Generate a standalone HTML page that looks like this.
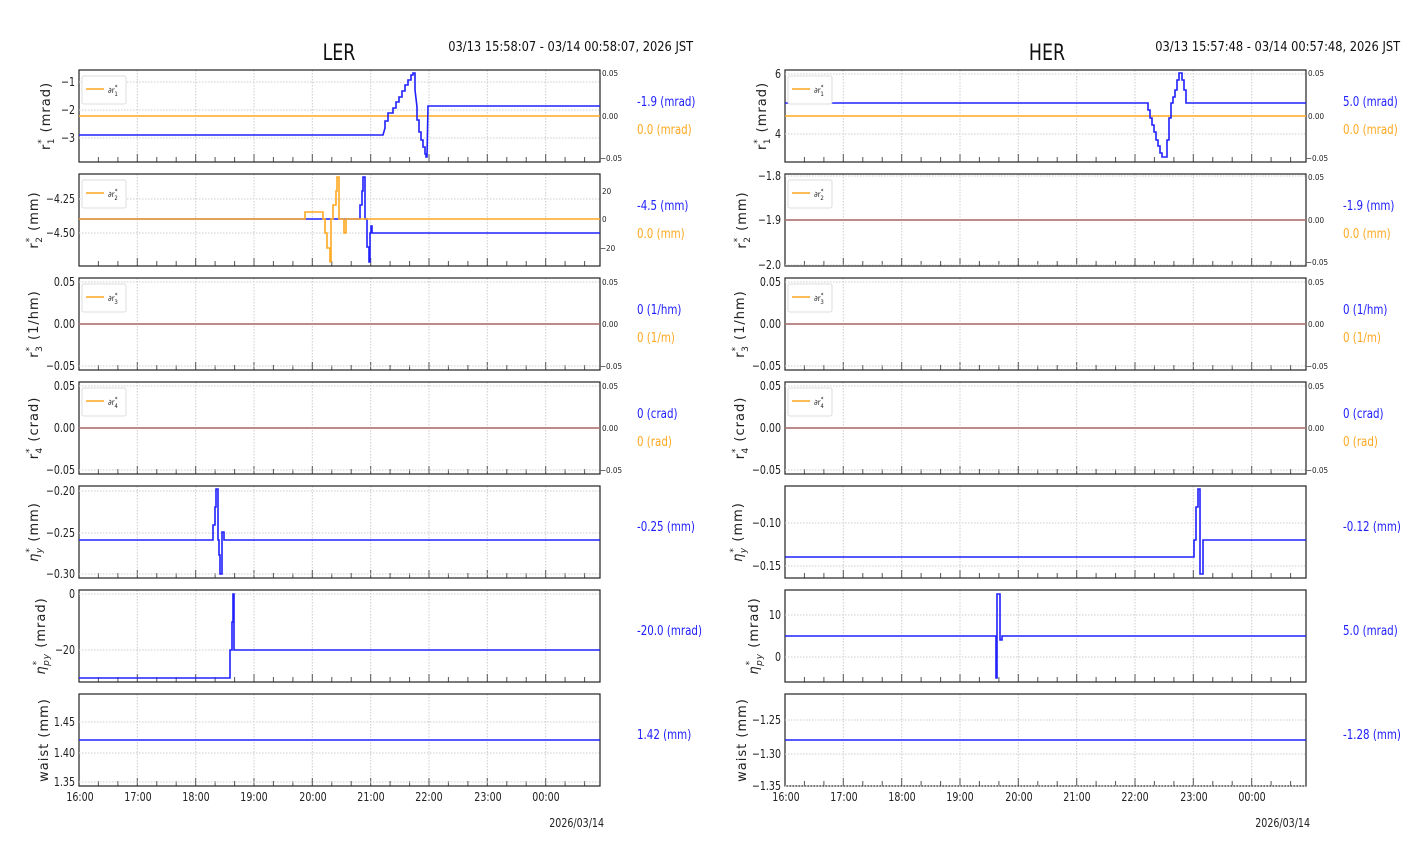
<!DOCTYPE html>
<html><head><meta charset="utf-8"><style>
html,body{margin:0;padding:0;background:#fff;width:1412px;height:864px;overflow:hidden}
svg{display:block}
.t{font-family:"DejaVu Sans Condensed","DejaVu Sans",sans-serif;font-size:12px;fill:#222}
.s{font-family:"DejaVu Sans Condensed","DejaVu Sans",sans-serif;font-size:8px;fill:#222}
.v{font-family:"DejaVu Sans Condensed","DejaVu Sans",sans-serif;font-size:13px}
.y{font-family:"DejaVu Sans","Liberation Sans",sans-serif;font-size:13px;fill:#222;letter-spacing:1px}
.b{fill:none;stroke:#2020ff;stroke-width:1.6}
.o{fill:none;stroke:#ffa820;stroke-width:1.6}
.g{stroke:#ccc;stroke-width:1;stroke-dasharray:1.5,1.5}
.cx{transform-box:fill-box;transform-origin:center;transform:scaleX(.88)}
.cr{transform-box:fill-box;transform-origin:right;transform:scaleX(.88)}
.cl{transform-box:fill-box;transform-origin:left;transform:scaleX(.88)}
</style></head><body>
<svg width="1412" height="864" viewBox="0 0 1412 864" xmlns="http://www.w3.org/2000/svg">
<defs>
<g id="F">
<path class="g" d="M58.3 0V92M116.7 0V92M175 0V92M233.3 0V92M291.7 0V92M350 0V92M408.3 0V92M466.7 0V92"/>
<path stroke="#555" stroke-width="1" d="M19.4 92v-5M38.9 92v-5M77.8 92v-5M97.2 92v-5M136.1 92v-5M155.6 92v-5M194.4 92v-5M213.9 92v-5M252.8 92v-5M272.2 92v-5M311.1 92v-5M330.6 92v-5M369.4 92v-5M388.9 92v-5M427.8 92v-5M447.2 92v-5M486.1 92v-5M505.6 92v-5M58.3 92v-8M116.7 92v-8M175 92v-8M233.3 92v-8M291.7 92v-8M350 92v-8M408.3 92v-8M466.7 92v-8"/>
<rect x="0" y="0" width="521" height="92" fill="none" stroke="#222" stroke-width="1.2"/>
</g>
<g id="LG"><rect x="0" y="0" width="44" height="28" rx="2" fill="#fff" stroke="#ddd"/><path d="M4 13h18" stroke="#ffa820" stroke-width="1.6"/></g>
</defs>

<!-- titles -->
<text class="cx" x="339" y="60" text-anchor="middle" font-family="DejaVu Sans Condensed,DejaVu Sans,sans-serif" font-size="22" fill="#111">LER</text>
<text class="cr" x="693" y="51" text-anchor="end" font-family="DejaVu Sans,sans-serif" font-size="13" fill="#111">03/13 15:58:07 - 03/14 00:58:07, 2026 JST</text>
<text class="cx" x="1047" y="60" text-anchor="middle" font-family="DejaVu Sans Condensed,DejaVu Sans,sans-serif" font-size="22" fill="#111">HER</text>
<text class="cr" x="1400" y="51" text-anchor="end" font-family="DejaVu Sans,sans-serif" font-size="13" fill="#111">03/13 15:57:48 - 03/14 00:57:48, 2026 JST</text>

<use href="#F" x="79" y="70"/><use href="#F" x="79" y="174"/><use href="#F" x="79" y="278"/><use href="#F" x="79" y="382"/><use href="#F" x="79" y="486"/><use href="#F" x="79" y="590"/><use href="#F" x="79" y="694"/>
<use href="#F" x="785" y="70"/><use href="#F" x="785" y="174"/><use href="#F" x="785" y="278"/><use href="#F" x="785" y="382"/><use href="#F" x="785" y="486"/><use href="#F" x="785" y="590"/><use href="#F" x="785" y="694"/>

<path class="g" d="M79 82H600M79 110H600M79 138H600M79 199H600M79 233H600M79 282H600M79 324H600M79 366H600M79 386H600M79 428H600M79 470H600M79 491H600M79 533H600M79 574H600M79 594H600M79 650H600M79 722H600M79 753H600M79 782H600"/>
<path class="g" d="M785 74H1306M785 134H1306M785 176H1306M785 220H1306M785 265H1306M785 282H1306M785 324H1306M785 366H1306M785 386H1306M785 428H1306M785 470H1306M785 523H1306M785 566H1306M785 615H1306M785 657H1306M785 720H1306M785 754H1306M785 786H1306"/>

<path class="o" d="M79 116H600"/>
<path class="b" d="M79 135H383L385 128V121H388V113H393V108H396V102H399V97H402V91H405V85H408V80H411V75H413V73H415V90L417 107V120H419V132H421V140H423V147H425V154H426V157H427L428 106H600"/>
<path class="b" d="M79 219H360V205H362V191H363V177H365V219H367V247H369V262H370V233H371V226H372V233H600"/>
<path class="o" d="M79 219H305V212H323V219H325V233H327V248H330V262H331V219H333V205H336V191H337V177H339V219H344V233H346V219H600"/>
<path class="b" d="M79 324H600M79 428H600"/>
<path class="o" d="M79 324H600M79 428H600" opacity="0.7"/>
<path class="b" d="M79 540H213V525H215V507H216V489H218V540H219V555H220V574H222V532H224V540H600"/>
<path class="b" d="M79 678H230V650H232V622H233V594H234V650H600"/>
<path class="b" d="M79 740H600"/>

<path class="o" d="M785 116H1306"/>
<path class="b" d="M785 103H1148V110H1150V118H1152V125H1154V132H1156V140H1158V146H1160V153H1162V157H1167V140H1169V118H1171V103H1173V97H1175V90H1177V80H1179V73H1182V80H1184V90H1186V103H1306"/>
<path class="b" d="M785 220H1306"/>
<path class="o" d="M785 220H1306" opacity="0.7"/>
<path class="b" d="M785 324H1306M785 428H1306"/>
<path class="o" d="M785 324H1306M785 428H1306" opacity="0.7"/>
<path class="b" d="M785 557H1194V540H1196V507H1198V489H1200V574H1203V540H1306"/>
<path class="b" d="M785 636H996V678H997V594H1000V640H1002V636H1306"/>
<path class="b" d="M785 740H1306"/>

<use href="#LG" x="82" y="76"/><text class="s" x="108" y="93">∂r<tspan font-size="6" dy="-4">*</tspan><tspan font-size="6" dx="-3" dy="7">1</tspan></text>
<use href="#LG" x="82" y="180"/><text class="s" x="108" y="197">∂r<tspan font-size="6" dy="-4">*</tspan><tspan font-size="6" dx="-3" dy="7">2</tspan></text>
<use href="#LG" x="82" y="284"/><text class="s" x="108" y="301">∂r<tspan font-size="6" dy="-4">*</tspan><tspan font-size="6" dx="-3" dy="7">3</tspan></text>
<use href="#LG" x="82" y="388"/><text class="s" x="108" y="405">∂r<tspan font-size="6" dy="-4">*</tspan><tspan font-size="6" dx="-3" dy="7">4</tspan></text>
<use href="#LG" x="788" y="76"/><text class="s" x="814" y="93">∂r<tspan font-size="6" dy="-4">*</tspan><tspan font-size="6" dx="-3" dy="7">1</tspan></text>
<use href="#LG" x="788" y="180"/><text class="s" x="814" y="197">∂r<tspan font-size="6" dy="-4">*</tspan><tspan font-size="6" dx="-3" dy="7">2</tspan></text>
<use href="#LG" x="788" y="284"/><text class="s" x="814" y="301">∂r<tspan font-size="6" dy="-4">*</tspan><tspan font-size="6" dx="-3" dy="7">3</tspan></text>
<use href="#LG" x="788" y="388"/><text class="s" x="814" y="405">∂r<tspan font-size="6" dy="-4">*</tspan><tspan font-size="6" dx="-3" dy="7">4</tspan></text>

<g class="t cr" text-anchor="end">
<text x="75" y="86">−1</text><text x="75" y="114">−2</text><text x="75" y="142">−3</text>
<text x="75" y="203">−4.25</text><text x="75" y="237">−4.50</text>
<text x="75" y="286">0.05</text><text x="75" y="328">0.00</text><text x="75" y="370">−0.05</text>
<text x="75" y="390">0.05</text><text x="75" y="432">0.00</text><text x="75" y="474">−0.05</text>
<text x="75" y="495">−0.20</text><text x="75" y="537">−0.25</text><text x="75" y="578">−0.30</text>
<text x="75" y="598">0</text><text x="75" y="654">−20</text>
<text x="75" y="726">1.45</text><text x="75" y="757">1.40</text><text x="75" y="786">1.35</text>
</g>
<g class="t cr" text-anchor="end">
<text x="781" y="78">6</text><text x="781" y="138">4</text>
<text x="781" y="180">−1.8</text><text x="781" y="224">−1.9</text><text x="781" y="269">−2.0</text>
<text x="781" y="286">0.05</text><text x="781" y="328">0.00</text><text x="781" y="370">−0.05</text>
<text x="781" y="390">0.05</text><text x="781" y="432">0.00</text><text x="781" y="474">−0.05</text>
<text x="781" y="527">−0.10</text><text x="781" y="570">−0.15</text>
<text x="781" y="619">10</text><text x="781" y="661">0</text>
<text x="781" y="724">−1.25</text><text x="781" y="758">−1.30</text><text x="781" y="790">−1.35</text>
</g>
<g class="s">
<text x="602" y="76">0.05</text><text x="602" y="119">0.00</text><text x="600" y="161">−0.05</text>
<text x="602" y="194">20</text><text x="602" y="222">0</text><text x="600" y="251">−20</text>
<text x="602" y="285">0.05</text><text x="602" y="327">0.00</text><text x="600" y="369">−0.05</text>
<text x="602" y="389">0.05</text><text x="602" y="431">0.00</text><text x="600" y="473">−0.05</text>
<text x="1308" y="76">0.05</text><text x="1308" y="119">0.00</text><text x="1306" y="161">−0.05</text>
<text x="1308" y="180">0.05</text><text x="1308" y="223">0.00</text><text x="1306" y="265">−0.05</text>
<text x="1308" y="285">0.05</text><text x="1308" y="327">0.00</text><text x="1306" y="369">−0.05</text>
<text x="1308" y="389">0.05</text><text x="1308" y="431">0.00</text><text x="1306" y="473">−0.05</text>
</g>

<g class="y" text-anchor="middle">
<text transform="translate(50,116) rotate(-90)">r<tspan font-size="9" dy="-6">*</tspan><tspan font-size="9" dx="-6" dy="10">1</tspan><tspan dy="-4"> (mrad)</tspan></text>
<text transform="translate(38,220) rotate(-90)">r<tspan font-size="9" dy="-6">*</tspan><tspan font-size="9" dx="-6" dy="10">2</tspan><tspan dy="-4"> (mm)</tspan></text>
<text transform="translate(38,324) rotate(-90)">r<tspan font-size="9" dy="-6">*</tspan><tspan font-size="9" dx="-6" dy="10">3</tspan><tspan dy="-4"> (1/hm)</tspan></text>
<text transform="translate(38,428) rotate(-90)">r<tspan font-size="9" dy="-6">*</tspan><tspan font-size="9" dx="-6" dy="10">4</tspan><tspan dy="-4"> (crad)</tspan></text>
<text transform="translate(38,532) rotate(-90)"><tspan font-style="italic">η</tspan><tspan font-size="9" dy="-6">*</tspan><tspan font-size="9" dx="-6" dy="10" font-style="italic">y</tspan><tspan dy="-4"> (mm)</tspan></text>
<text transform="translate(45,636) rotate(-90)"><tspan font-style="italic">η</tspan><tspan font-size="9" dy="-6">*</tspan><tspan font-size="9" dx="-6" dy="10" font-style="italic">py</tspan><tspan dy="-4"> (mrad)</tspan></text>
<text transform="translate(48,740) rotate(-90)">waist (mm)</text>

<text transform="translate(766,116) rotate(-90)">r<tspan font-size="9" dy="-6">*</tspan><tspan font-size="9" dx="-6" dy="10">1</tspan><tspan dy="-4"> (mrad)</tspan></text>
<text transform="translate(746,220) rotate(-90)">r<tspan font-size="9" dy="-6">*</tspan><tspan font-size="9" dx="-6" dy="10">2</tspan><tspan dy="-4"> (mm)</tspan></text>
<text transform="translate(744,324) rotate(-90)">r<tspan font-size="9" dy="-6">*</tspan><tspan font-size="9" dx="-6" dy="10">3</tspan><tspan dy="-4"> (1/hm)</tspan></text>
<text transform="translate(744,428) rotate(-90)">r<tspan font-size="9" dy="-6">*</tspan><tspan font-size="9" dx="-6" dy="10">4</tspan><tspan dy="-4"> (crad)</tspan></text>
<text transform="translate(742,532) rotate(-90)"><tspan font-style="italic">η</tspan><tspan font-size="9" dy="-6">*</tspan><tspan font-size="9" dx="-6" dy="10" font-style="italic">y</tspan><tspan dy="-4"> (mm)</tspan></text>
<text transform="translate(758,636) rotate(-90)"><tspan font-style="italic">η</tspan><tspan font-size="9" dy="-6">*</tspan><tspan font-size="9" dx="-6" dy="10" font-style="italic">py</tspan><tspan dy="-4"> (mrad)</tspan></text>
<text transform="translate(746,740) rotate(-90)">waist (mm)</text>
</g>

<g class="v cl">
<text x="637" y="106" fill="#2020ff">-1.9 (mrad)</text><text x="637" y="134" fill="#ffa820">0.0 (mrad)</text>
<text x="637" y="210" fill="#2020ff">-4.5 (mm)</text><text x="637" y="238" fill="#ffa820">0.0 (mm)</text>
<text x="637" y="314" fill="#2020ff">0 (1/hm)</text><text x="637" y="342" fill="#ffa820">0 (1/m)</text>
<text x="637" y="418" fill="#2020ff">0 (crad)</text><text x="637" y="446" fill="#ffa820">0 (rad)</text>
<text x="637" y="531" fill="#2020ff">-0.25 (mm)</text>
<text x="637" y="635" fill="#2020ff">-20.0 (mrad)</text>
<text x="637" y="739" fill="#2020ff">1.42 (mm)</text>
</g>
<g class="v cl">
<text x="1343" y="106" fill="#2020ff">5.0 (mrad)</text><text x="1343" y="134" fill="#ffa820">0.0 (mrad)</text>
<text x="1343" y="210" fill="#2020ff">-1.9 (mm)</text><text x="1343" y="238" fill="#ffa820">0.0 (mm)</text>
<text x="1343" y="314" fill="#2020ff">0 (1/hm)</text><text x="1343" y="342" fill="#ffa820">0 (1/m)</text>
<text x="1343" y="418" fill="#2020ff">0 (crad)</text><text x="1343" y="446" fill="#ffa820">0 (rad)</text>
<text x="1343" y="531" fill="#2020ff">-0.12 (mm)</text>
<text x="1343" y="635" fill="#2020ff">5.0 (mrad)</text>
<text x="1343" y="739" fill="#2020ff">-1.28 (mm)</text>
</g>

<g class="t" text-anchor="middle">
<text class="cx" x="80" y="801">16:00</text><text class="cx" x="138" y="801">17:00</text><text class="cx" x="196" y="801">18:00</text><text class="cx" x="254" y="801">19:00</text><text class="cx" x="313" y="801">20:00</text><text class="cx" x="371" y="801">21:00</text><text class="cx" x="429" y="801">22:00</text><text class="cx" x="488" y="801">23:00</text><text class="cx" x="546" y="801">00:00</text>
<text class="cx" x="786" y="801">16:00</text><text class="cx" x="844" y="801">17:00</text><text class="cx" x="902" y="801">18:00</text><text class="cx" x="960" y="801">19:00</text><text class="cx" x="1019" y="801">20:00</text><text class="cx" x="1077" y="801">21:00</text><text class="cx" x="1135" y="801">22:00</text><text class="cx" x="1194" y="801">23:00</text><text class="cx" x="1252" y="801">00:00</text>
</g>
<text class="t cr" x="604" y="827" text-anchor="end">2026/03/14</text>
<text class="t cr" x="1310" y="827" text-anchor="end">2026/03/14</text>
</svg>
</body></html>
